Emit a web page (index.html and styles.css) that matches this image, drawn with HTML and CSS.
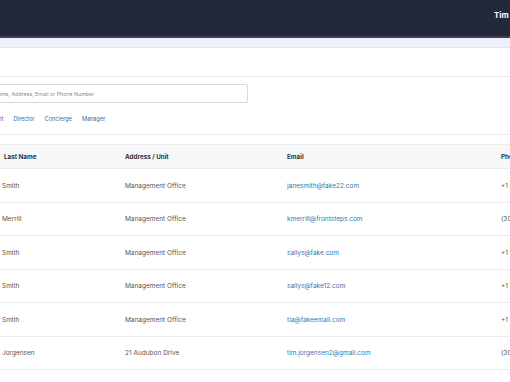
FILE: index.html
```html
<!DOCTYPE html>
<html lang="en">
<head>
<meta charset="UTF-8">
<title>Directory</title>
<link rel="stylesheet" href="styles.css">
</head>
<body>
<div id="topbar">
<div class="brand"></div>
<div class="user">Tim</div>
</div>
<div id="subbar"></div>
<div id="page">
<div class="search-card">
<input type="text" class="search-input" placeholder="Search by Name, Address, Email or Phone Number">
<div class="filters">
<a href="#">All</a>
<a href="#">Resident</a>
<a href="#">Director</a>
<a href="#">Concierge</a>
<a href="#">Manager</a>
</div>
</div>
<table class="people">
<colgroup>
<col class="c-first">
<col class="c-last">
<col class="c-addr">
<col class="c-email">
<col class="c-phone">
</colgroup>
<thead>
<tr>
<th>First Name</th>
<th>Last Name</th>
<th>Address / Unit</th>
<th>Email</th>
<th>Phone</th>
</tr>
</thead>
<tbody>
<tr><td>Jane</td><td>Smith</td><td>Management Office</td><td><a href="#">janesmith@fake22.com</a></td><td>+1 (303) 555-0101</td></tr>
<tr><td>Kim</td><td>Merrill</td><td>Management Office</td><td><a href="#">kmerrill@frontsteps.com</a></td><td>(303) 555-0142</td></tr>
<tr><td>Sally</td><td>Smith</td><td>Management Office</td><td><a href="#">sallys@fake.com</a></td><td>+1 (303) 555-0177</td></tr>
<tr><td>Sally</td><td>Smith</td><td>Management Office</td><td><a href="#">sallys@fake12.com</a></td><td>+1 (303) 555-0178</td></tr>
<tr><td>Tia</td><td>Smith</td><td>Management Office</td><td><a href="#">tia@fakeemail.com</a></td><td>+1 (303) 555-0190</td></tr>
<tr><td>Tim</td><td>Jorgensen</td><td>21 Audubon Drive</td><td><a href="#">tim.jorgensen2@gmail.com</a></td><td>(303) 555-0123</td></tr>
<tr><td></td><td></td><td></td><td></td><td></td></tr>
</tbody>
</table>
</div>
</body>
</html>
```

FILE: styles.css
```css
html, body {
margin: 0;
padding: 0;
overflow: hidden;
background-color: #fff;
font-family: Inter, "Liberation Sans", sans-serif;
}
#topbar {
display: flex;
justify-content: space-between;
height: 36px;
background-color: #222a3a;
border-bottom: 2px solid #3d4354;
}
#topbar .user {
width: 16px;
padding-left: 12px;
border-left: 1px solid #1d2433;
color: #fff;
font-weight: 700;
font-size: 8px;
line-height: 31px;
white-space: nowrap;
}
#subbar {
height: 9px;
background-color: #eef1fb;
border-bottom: 1px solid #e1e6ee;
}
#page {
margin-left: -122px;
width: 900px;
padding-top: 28px;
}
.search-card {
border-top: 1px solid #ececec;
border-bottom: 1px solid #ececec;
padding: 7px 0 0 82px;
height: 50px;
}
.search-input {
display: block;
box-sizing: border-box;
width: 288px;
height: 19px;
border: 1px solid #d6d9de;
border-radius: 2px;
padding: 0 6px;
font-family: Inter, "Liberation Sans", sans-serif;
font-size: 5.3px;
color: #444;
}
.search-input::placeholder {
color: #8a8d92;
}
.filters {
display: flex;
gap: 10px;
margin-top: 13px;
padding-left: 4px;
}
.filters a {
color: #2f6da8;
font-size: 5.6px;
text-decoration: none;
}
.people {
margin-top: 9px;
border-collapse: collapse;
table-layout: fixed;
width: 900px;
font-size: 6.5px;
}
.c-first { width: 124px; }
.c-last { width: 123px; }
.c-addr { width: 162px; }
.c-email { width: 214px; }
.c-phone { width: 277px; }
.people th {
height: 23px;
padding: 0;
text-align: left;
font-size: 6.3px;
font-weight: 700;
color: #333;
background-color: #f6f7f9;
border-top: 1px solid #ececec;
border-bottom: 1px solid #ececec;
}
.people th:nth-child(2) {
padding-left: 2px;
}
.people td {
height: 31.5px;
padding: 1px 0 0 0;
color: #555;
border-bottom: 1px solid #ececec;
white-space: nowrap;
}
.people td a {
color: #3576b0;
text-decoration: none;
}
```
